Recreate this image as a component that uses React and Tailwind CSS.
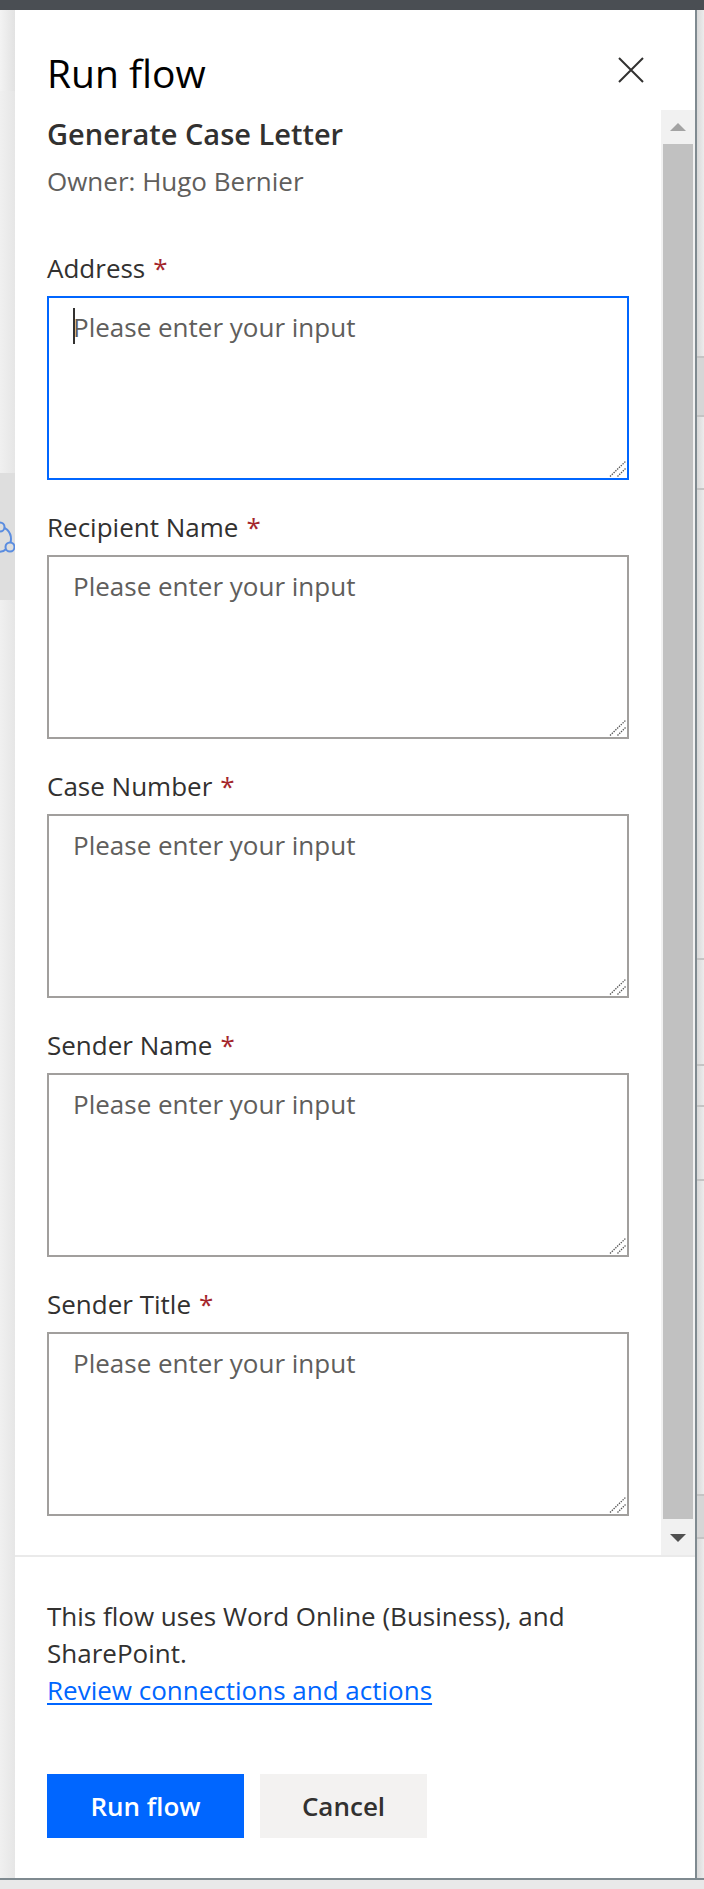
import React from "react";

const FIELDS = ["Address", "Recipient Name", "Case Number", "Sender Name", "Sender Title"];

const RIGHT_SEGMENTS = [
  [346, false, false],
  [59, true, true],
  [73, true, false],
  [470, true, false],
  [106, true, false],
  [41, true, false],
  [74, true, false],
  [315, true, false],
  [43, true, true],
  [73, true, false],
];

function Field({ label, focused }) {
  return (
    <div className={focused ? "" : "mt-[17px]"}>
      <div className="pt-[10px] pb-[8px] text-[26px] leading-[40px] text-[#323130]">
        {label}
        <span className="ml-[8px] text-[#a4262c]">*</span>
      </div>
      <div className="relative">
        <textarea
          placeholder="Please enter your input"
          className={
            "block w-[582px] h-[184px] bg-white border-2 px-[24px] py-[12px] text-[26px] leading-[34px] text-[#323130] placeholder:text-[#605e5c] outline-none resize-none font-['Open_Sans',sans-serif] " +
            (focused ? "border-[#0066ff]" : "border-[#a19f9d]")
          }
        />
        {focused && <div className="absolute left-[26px] top-[12px] w-[2px] h-[36px] bg-[#323130]" />}
        <svg className="absolute right-[3px] bottom-[3px]" width="17" height="16" viewBox="0 0 17 16">
          <path d="M1 15.5 L16.5 0.5" stroke="#555555" strokeWidth="1.3" strokeDasharray="1.4 1.1" fill="none" />
          <path d="M8.5 15.5 L16.5 7.5" stroke="#555555" strokeWidth="1.3" strokeDasharray="1.4 1.1" fill="none" />
        </svg>
      </div>
    </div>
  );
}

export default function App() {
  return (
    <div className="w-[704px] h-[1889px] overflow-hidden bg-[#e9e9e9] flex flex-col font-['Open_Sans',sans-serif]">
      <div className="h-[10px] shrink-0 bg-[#4a4e53]" />
      <div className="flex h-[1868px] shrink-0">
        {/* left strip (page behind the panel) */}
        <div className="w-[15px] shrink-0 flex flex-col">
          <div className="h-[81px] bg-linear-to-r from-[#f3f3f3] to-[#e2e2e2]" />
          <div className="h-[382px] bg-linear-to-r from-[#f0f0f0] to-[#e6e6e6]" />
          <div className="h-[127px] bg-[#dedede] overflow-hidden">
            <svg width="15" height="127" viewBox="0 0 15 127">
              <circle cx="-2" cy="66" r="13" fill="none" stroke="#5b8de0" strokeWidth="2" />
              <circle cx="10" cy="74" r="4.5" fill="#dedede" stroke="#5b8de0" strokeWidth="2" />
              <circle cx="0" cy="54" r="4.5" fill="#dedede" stroke="#5b8de0" strokeWidth="2" />
            </svg>
          </div>
          <div className="flex-1 bg-linear-to-r from-[#f0f0f0] to-[#e6e6e6]" />
        </div>

        {/* panel */}
        <div className="w-[680px] shrink-0 bg-white flex flex-col">
          {/* header */}
          <div className="h-[100px] shrink-0 flex items-start justify-between pl-[32px] pr-[51px] pt-[36px]">
            <div className="text-[39px] leading-[53px] font-medium text-[#000000]">Run flow</div>
            <svg className="mt-[11px]" width="26" height="26" viewBox="0 0 26 26">
              <path d="M1 1 L25 25 M25 1 L1 25" stroke="#323130" strokeWidth="2" fill="none" />
            </svg>
          </div>

          {/* body */}
          <div className="h-[1445px] shrink-0 flex">
            <div className="w-[646px] pl-[32px] pr-[32px] pt-[4px] overflow-hidden">
              <div className="text-[29px] leading-[40px] font-semibold text-[#323130]">Generate Case Letter</div>
              <div className="mt-[7px] text-[26px] leading-[40px] text-[#605e5c]">Owner: Hugo Bernier</div>
              <div className="mt-[37px]">
                {FIELDS.map((f, i) => (
                  <Field key={f} label={f} focused={i === 0} />
                ))}
              </div>
            </div>
            {/* scrollbar */}
            <div className="w-[34px] shrink-0 bg-[#f1f1f1] flex flex-col">
              <div className="h-[34px] flex items-center justify-center">
                <svg width="16" height="8" viewBox="0 0 16 8">
                  <path d="M8 0 L16 8 L0 8 Z" fill="#a3a3a3" />
                </svg>
              </div>
              <div className="h-[1375px] mx-[2px] bg-[#c1c1c1]" />
              <div className="mt-[2px] h-[34px] flex items-center justify-center">
                <svg width="16" height="8" viewBox="0 0 16 8">
                  <path d="M0 0 L16 0 L8 8 Z" fill="#505050" />
                </svg>
              </div>
            </div>
          </div>

          {/* footer */}
          <div className="flex-1 border-t-2 border-[#eaeaea] pl-[32px] pr-[32px] pt-[41px]">
            <p className="text-[26px] leading-[37px] text-[#323130]">
              This flow uses Word Online (Business), and SharePoint.
            </p>
            <a href="#" className="block w-fit text-[26px] leading-[37px] text-[#0066ff] underline decoration-2 underline-offset-[3px]">
              Review connections and actions
            </a>
            <div className="mt-[65px] flex gap-[16px]">
              <button className="w-[197px] h-[64px] bg-[#0066ff] text-white text-[26px] font-semibold">Run flow</button>
              <button className="w-[167px] h-[64px] bg-[#f3f2f1] text-[#323130] text-[26px] font-semibold">Cancel</button>
            </div>
          </div>
        </div>

        <div className="w-[2px] shrink-0 bg-[#7f8a90]" />

        {/* right strip */}
        <div className="flex-1 flex flex-col bg-linear-to-r from-[#d9d9d9] to-[#ececec]">
          {RIGHT_SEGMENTS.map(([h, line, dark], i) => (
            <div
              key={i}
              className={
                "shrink-0 " +
                (line ? "border-t-2 border-[#c4c4c4] " : "") +
                (dark ? "bg-[#d6d6d6]" : "")
              }
              style={{ height: h }}
            />
          ))}
        </div>
      </div>
      <div className="h-[2px] shrink-0 bg-[#7f8a90]" />
      <div className="flex-1 bg-[#e9e9e9]" />
    </div>
  );
}
